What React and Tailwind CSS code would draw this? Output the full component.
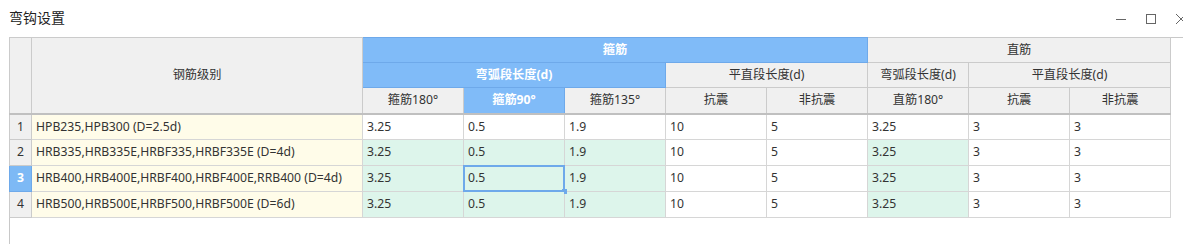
import { useState } from "react";

const rows = [
  { id: 1, name: "HPB235,HPB300 (D=2.5d)", green: false },
  { id: 2, name: "HRB335,HRB335E,HRBF335,HRBF335E (D=4d)", green: true },
  { id: 3, name: "HRB400,HRB400E,HRBF400,HRBF400E,RRB400 (D=4d)", green: true },
  { id: 4, name: "HRB500,HRB500E,HRBF500,HRBF500E (D=6d)", green: true },
];

const gray = "bg-[#f0f0f0] border border-[#cbcbcb] text-center font-normal";
const blue = "bg-[#80bbf8] border border-[#6ea9ea] text-center text-white font-bold";
const cell = "border border-[#d6d6d6] pl-[4px] text-left align-middle whitespace-nowrap";

const App = () => {
  const [selected] = useState({ row: 3, col: 1 });

  return (
    <div
      className="w-[1183px] h-[244px] bg-white flex flex-col text-[12.2px] text-[#333]"
      style={{ fontFamily: '"Microsoft YaHei", "Noto Sans", "Noto Sans CJK SC", sans-serif' }}
    >
      <div className="h-[37px] flex items-center justify-between pl-[9px]">
        <span className="text-[14px] text-[#222] leading-none -mt-[2px]">弯钩设置</span>
        <div className="flex items-center gap-[18px] text-[#666] -mr-[4px]">
          <svg width="12" height="12" viewBox="0 0 12 12"><path d="M1 6.5h10" stroke="currentColor" strokeWidth="1" /></svg>
          <svg width="12" height="12" viewBox="0 0 12 12"><rect x="1.5" y="1.5" width="9" height="9" fill="none" stroke="currentColor" strokeWidth="1" /></svg>
          <svg width="12" height="12" viewBox="0 0 12 12"><path d="M1 1l10 10M11 1L1 11" stroke="currentColor" strokeWidth="1" /></svg>
        </div>
      </div>

      <div className="flex-1 ml-[9px] border-l border-t border-[#c8c8c8]">
        <table className="border-collapse table-fixed w-[1161px] -mt-px -ml-px">
          <colgroup>
            <col className="w-[22px]" />
            <col className="w-[331px]" />
            {Array.from({ length: 8 }).map((_, i) => (
              <col key={i} className="w-[101px]" />
            ))}
          </colgroup>
          <thead>
            <tr className="h-[25px]">
              <th rowSpan={3} className={gray}></th>
              <th rowSpan={3} className={gray}>钢筋级别</th>
              <th colSpan={5} className={blue}>箍筋</th>
              <th colSpan={3} className={gray}>直筋</th>
            </tr>
            <tr className="h-[25px]">
              <th colSpan={3} className={blue}>弯弧段长度(d)</th>
              <th colSpan={2} className={gray}>平直段长度(d)</th>
              <th className={gray}>弯弧段长度(d)</th>
              <th colSpan={2} className={gray}>平直段长度(d)</th>
            </tr>
            <tr className="h-[26px] border-b-2 border-[#c0c0c0]">
              <th className={gray}>箍筋180°</th>
              <th className={blue}>箍筋90°</th>
              <th className={gray}>箍筋135°</th>
              <th className={gray}>抗震</th>
              <th className={gray}>非抗震</th>
              <th className={gray}>直筋180°</th>
              <th className={gray}>抗震</th>
              <th className={gray}>非抗震</th>
            </tr>
          </thead>
          <tbody>
            {rows.map((r) => {
              const g = r.green ? "bg-[#ddf5eb]" : "bg-white";
              const isSel = r.id === selected.row;
              return (
                <tr key={r.id} className="h-[26px]">
                  <td
                    className={
                      isSel
                        ? "bg-[#7db9f5] border border-[#6ea9ea] text-center text-white font-bold"
                        : "bg-[#f0f0f0] border border-[#cbcbcb] text-center"
                    }
                  >
                    {r.id}
                  </td>
                  <td className={`${cell} bg-[#fffce9]`}>{r.name}</td>
                  <td className={`${cell} ${g}`}>3.25</td>
                  <td className={`${cell} ${g} relative`}>
                    {isSel && (
                      <>
                        <div className="absolute -inset-px border-2 border-[#6ea9ea]" />
                        <div className="absolute -right-[3px] -bottom-[3px] w-[5px] h-[5px] bg-[#6ea9ea]" />
                      </>
                    )}
                    0.5
                  </td>
                  <td className={`${cell} ${g}`}>1.9</td>
                  <td className={`${cell} bg-white`}>10</td>
                  <td className={`${cell} bg-white`}>5</td>
                  <td className={`${cell} ${g}`}>3.25</td>
                  <td className={`${cell} bg-white`}>3</td>
                  <td className={`${cell} bg-white`}>3</td>
                </tr>
              );
            })}
          </tbody>
        </table>
      </div>
    </div>
  );
};

export default App;
